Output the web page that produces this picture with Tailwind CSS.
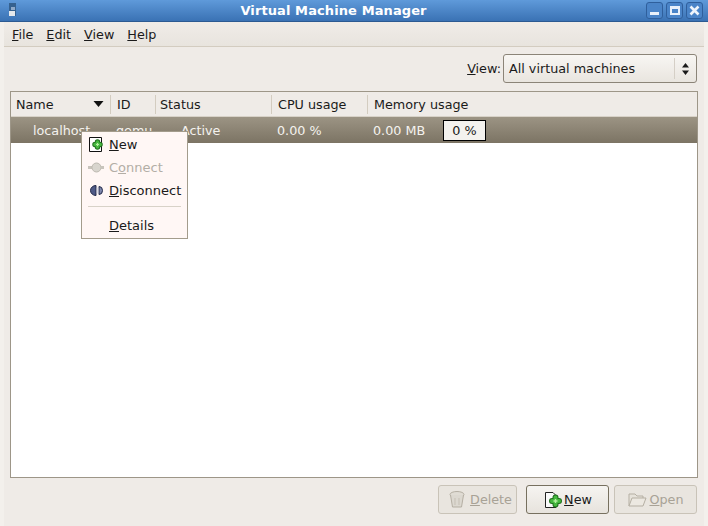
<!DOCTYPE html>
<html lang="en">
<head>
  <meta charset="UTF-8" />
  <title>Virtual Machine Manager</title>
  <script src="https://cdn.jsdelivr.net/npm/@tailwindcss/browser@4"></script>
</head>
<body class="bg-[#f3f0ec]">
  <div class="relative w-[708px] h-[526px] overflow-hidden flex flex-col bg-[#f3f0ec] text-[12.75px] leading-[15px] text-[#1a1a1a] font-['DejaVu_Sans',sans-serif]">

    <!-- title bar -->
    <div class="relative h-[22px] shrink-0 flex items-center justify-center bg-gradient-to-b from-[#5f9ada] to-[#3a72b4] border-b border-[#2c5a92] pr-[41px]">
      <svg class="absolute left-[8px] top-[3px]" width="10" height="14" viewBox="0 0 10 14">
        <rect x="1" y="0" width="7" height="13" fill="#35618f" />
        <rect x="1" y="8" width="6" height="5" fill="#e4e8ec" />
        <rect x="3" y="4" width="4" height="3" fill="#8fa9c8" />
      </svg>
      <span class="font-bold text-[13px] text-white tracking-[0.1px] mb-[1px]">Virtual Machine Manager</span>
      <div class="absolute right-[5px] top-[2px] flex gap-[3px]">
        <div class="w-[17px] h-[17px] rounded-[3px] border border-[#2f5f9c] bg-[#4a84c8] flex items-end justify-center pb-[3px]">
          <div class="w-[9px] h-[3px] bg-[#e8f0fa]"></div>
        </div>
        <div class="w-[17px] h-[17px] rounded-[3px] border border-[#2f5f9c] bg-[#4a84c8] flex items-center justify-center">
          <div class="w-[10px] h-[9px] border-2 border-t-[3px] border-[#e8f0fa]"></div>
        </div>
        <div class="w-[17px] h-[17px] rounded-[3px] border border-[#2f5f9c] bg-[#4a84c8] flex items-center justify-center">
          <svg width="11" height="11" viewBox="0 0 11 11"><path d="M1.5 1.5 9.5 9.5M9.5 1.5 1.5 9.5" stroke="#eef4fb" stroke-width="2.6" /></svg>
        </div>
      </div>
    </div>

    <div class="flex-1 flex flex-col ml-[4px] mr-[4px] min-h-0 bg-[#efebe7]">
      <!-- menu bar -->
      <div class="h-[25px] shrink-0 flex items-center gap-[13px] pl-[8px] bg-gradient-to-b from-[#f0ece8] to-[#e8e4de] border-b border-[#d3ccc0]">
        <span><u>F</u>ile</span>
        <span><u>E</u>dit</span>
        <span><u>V</u>iew</span>
        <span><u>H</u>elp</span>
      </div>

      <!-- view filter -->
      <div class="h-[44px] shrink-0 flex items-center justify-end pr-[7px] pb-[1px] gap-[2px]">
        <span class="text-[#1a1a1a]"><u>V</u>iew:</span>
        <div class="w-[194px] h-[29px] flex items-center justify-between rounded-[3px] border border-[#8b8478] bg-gradient-to-b from-[#f8f6f3] to-[#e9e5df] pl-[5px] pr-[6px]">
          <span>All virtual machines</span>
          <div class="h-[21px] border-l border-[#d5cfc6] pl-[6px] flex items-center">
            <svg width="9" height="14" viewBox="0 0 9 14"><path d="M4.5 1 8 5.5H1ZM4.5 13 1 8.5H8Z" fill="#1a1a1a" /></svg>
          </div>
        </div>
      </div>

      <!-- vm list -->
      <div class="ml-[6px] mr-[6px] h-[387px] shrink-0 flex flex-col border border-[#9d9688] bg-white">
        <div class="h-[25px] shrink-0 flex items-center bg-[#efebe7] border-b border-[#d8d2c8]">
          <div class="w-[100px] h-[19px] flex items-center justify-between pl-[5px] pr-[6px] border-r border-[#d3ccc0]">
            <span>Name</span>
            <svg width="11" height="6" viewBox="0 0 11 6"><path d="M0.5 0H10.5L5.5 6Z" fill="#111" /></svg>
          </div>
          <div class="w-[45px] h-[19px] flex items-center pl-[6px] border-r border-[#d3ccc0]">ID</div>
          <div class="w-[116px] h-[19px] flex items-center pl-[4px] border-r border-[#d3ccc0]">Status</div>
          <div class="w-[96px] h-[19px] flex items-center pl-[6px] border-r border-[#d3ccc0]">CPU usage</div>
          <div class="pl-[6px]">Memory usage</div>
        </div>
        <div class="h-[26px] shrink-0 flex items-center text-[#f4f2ee] bg-gradient-to-b from-[#9c9484] to-[#7c7464]">
          <span class="w-[105px] pl-[22px]">localhost</span>
          <span class="w-[65px]">qemu</span>
          <span class="w-[96px]">Active</span>
          <span class="w-[96px]">0.00 %</span>
          <span class="w-[70px]">0.00 MB</span>
          <div class="w-[43px] h-[21px] flex items-center justify-center border border-black bg-[#f4f2ee] text-[#1a1a1a]">0 %</div>
        </div>
      </div>

      <!-- action buttons -->
      <div class="flex-1 flex items-start justify-end pt-[7px] pr-[7px]">
        <div class="w-[79px] h-[29px] mr-[9px] pl-[5px] flex items-center justify-center gap-[4px] rounded-[3px] border border-[#c9c3b8] bg-[#e9e5df] text-[#a8a296]">
          <svg width="18" height="19" viewBox="0 0 18 19"><ellipse cx="9" cy="4.5" rx="7" ry="3" fill="#e0dcd4" stroke="#b5afa3" /><path d="M2.5 5 4.5 17H13.5L15.5 5" fill="#dcd8d0" stroke="#b5afa3" /><path d="M7 8V15M11 8V15" stroke="#c5bfb4" /></svg>
          <span><u>D</u>elete</span>
        </div>
        <div class="w-[83px] h-[29px] mr-[5px] flex items-center justify-center gap-[1px] rounded-[3px] border border-[#77705f] bg-gradient-to-b from-[#f6f4f1] to-[#e7e3dd]">
          <svg width="20" height="20" viewBox="0 0 20 20">
            <path d="M2.5 2.5H10L13 5.5V17.5H2.5Z" fill="#fafafa" stroke="#222" />
            <path d="M12.5 7.5V14.5M9 11H16" stroke="#1f6f1d" stroke-width="6" stroke-linecap="round" />
            <path d="M12.5 7.5V14.5M9 11H16" stroke="#46b83f" stroke-width="4" stroke-linecap="round" />
            <path d="M12.5 9V13M10.5 11H14.5" stroke="#b5efa0" stroke-width="1.4" />
          </svg>
          <span><u>N</u>ew</span>
        </div>
        <div class="w-[83px] h-[29px] flex items-center justify-center gap-[2px] rounded-[3px] border border-[#c9c3b8] bg-[#e9e5df] text-[#a8a296]">
          <svg width="20" height="17" viewBox="0 0 20 17"><path d="M2 15V3H8L10 5H16V7" fill="#e6e2da" stroke="#b5afa3" /><path d="M2 15 5 7H19L16 15Z" fill="#ece8e1" stroke="#b5afa3" /></svg>
          <span><u>O</u>pen</span>
        </div>
      </div>
    </div>

    <!-- context menu, sits over the list -->
    <div class="absolute left-[81px] top-[131px] w-[107px] h-[108px] flex flex-col text-[13px] bg-[#fff7f5] border border-[#a39c8c]">
      <div class="h-[24px] mt-[1px] flex items-center pl-[6px] gap-[4px]">
        <svg class="w-[17px] h-[17px] shrink-0" viewBox="0 0 17 17">
          <path d="M1.5 1.5H13.5V15.5H1.5Z" fill="#fff" stroke="#111" />
          <path d="M9.5 6V11M7 8.5H12" stroke="#1f6f1d" stroke-width="5.5" stroke-linecap="round" />
          <path d="M9.5 6V11M7 8.5H12" stroke="#46b83f" stroke-width="3.6" stroke-linecap="round" />
          <path d="M9.5 7V10M8 8.5H11" stroke="#b5efa0" stroke-width="1.2" />
        </svg>
        <span><u>N</u>ew</span>
      </div>
      <div class="h-[22px] flex items-center pl-[6px] gap-[4px] text-[#b3aea6]">
        <svg class="w-[17px] h-[17px] shrink-0" viewBox="0 0 17 17">
          <rect x="0" y="7" width="4" height="3" fill="#c8c4bc" />
          <circle cx="8.5" cy="8.5" r="4.5" fill="#d8d5ce" stroke="#bdb9b0" />
          <rect x="13" y="7" width="3" height="3" fill="#c8c4bc" />
        </svg>
        <span>C<u>o</u>nnect</span>
      </div>
      <div class="h-[24px] flex items-center pl-[6px] gap-[4px]">
        <svg class="w-[17px] h-[17px] shrink-0" viewBox="0 0 17 17">
          <path d="M8 3.5A5.5 5 0 0 0 8 13.5Z" fill="#4e5a86" stroke="#232a4a" />
          <path d="M11 4.5A3.5 4 0 0 1 11 12.5Z" fill="#7e88ae" stroke="#232a4a" />
          <path d="M9.5 5.5V11.5" stroke="#d8dbe8" stroke-width="1.5" />
        </svg>
        <span><u>D</u>isconnect</span>
      </div>
      <div class="mx-[6px] mt-[4px] mb-[5px] border-t border-[#d8d2c8]"></div>
      <div class="h-[26px] flex items-center pl-[27px]"><span><u>D</u>etails</span></div>
    </div>
  </div>
</body>
</html>
